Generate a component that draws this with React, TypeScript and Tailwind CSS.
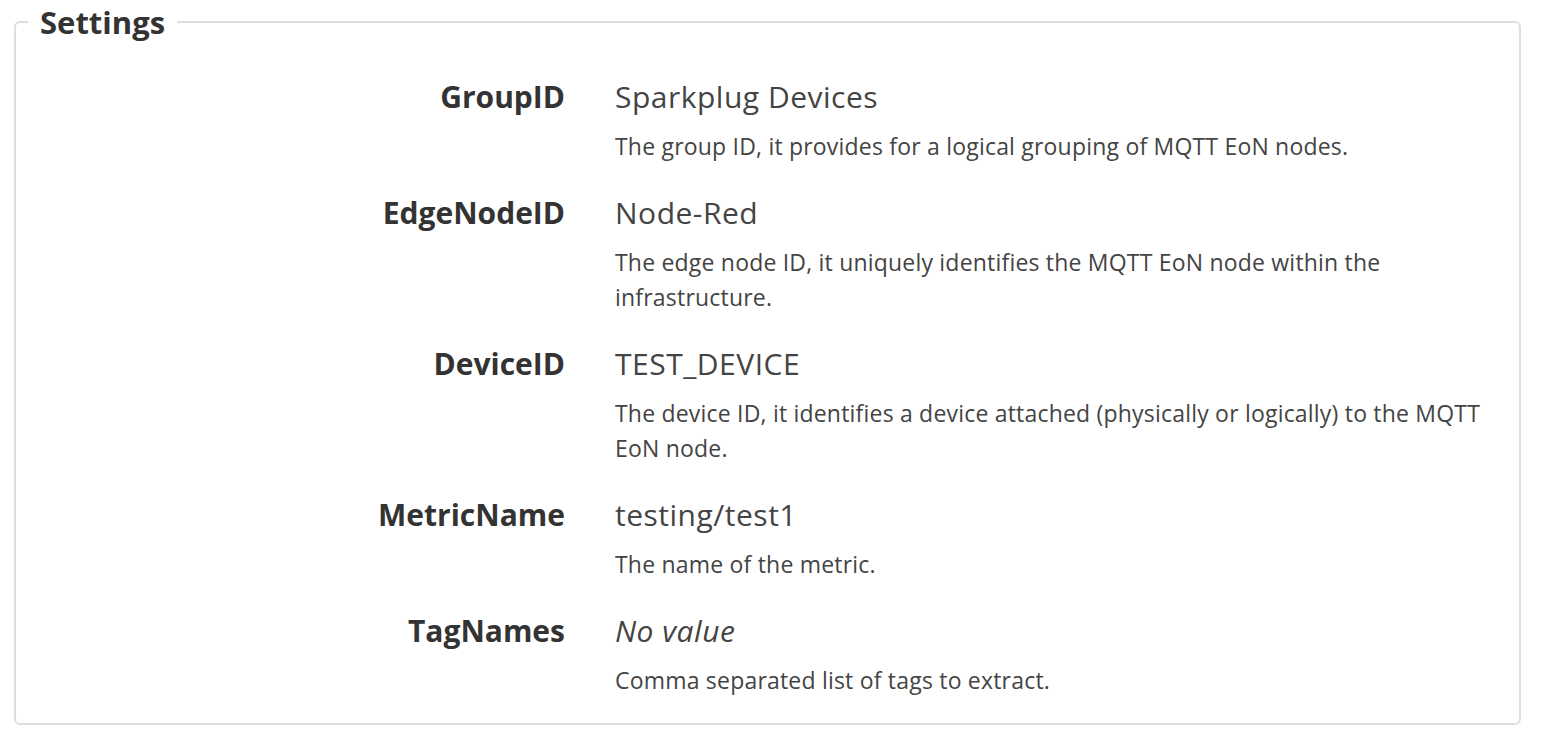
import React from 'react';

interface SettingRow {
  label: string;
  value?: string;
  description: string;
}

const rows: SettingRow[] = [
  {
    label: 'GroupID',
    value: 'Sparkplug Devices',
    description: 'The group ID, it provides for a logical grouping of MQTT EoN nodes.'
  },
  {
    label: 'EdgeNodeID',
    value: 'Node-Red',
    description: 'The edge node ID, it uniquely identifies the MQTT EoN node within the infrastructure.'
  },
  {
    label: 'DeviceID',
    value: 'TEST_DEVICE',
    description:
      'The device ID, it identifies a device attached (physically or logically) to the MQTT EoN node.'
  },
  {
    label: 'MetricName',
    value: 'testing/test1',
    description: 'The name of the metric.'
  },
  {
    label: 'TagNames',
    description: 'Comma separated list of tags to extract.'
  }
];

const App: React.FC = () => {
  return (
    <div className="min-h-screen bg-white pl-[14px] pr-[22px] font-['Open_Sans',sans-serif] text-[#333]">
      <fieldset className="rounded-md border-2 border-[#dedede] px-3 pt-[33px] pb-[25px]">
        <legend className="px-3 text-[31px] leading-[44px] font-bold text-[#333]">Settings</legend>

        <div className="-ml-3 flex flex-col gap-[29px]">
          {rows.map((row) => (
            <div key={row.label} className="grid grid-cols-[549px_1fr] gap-x-[50px]">
              {/* Label */}
              <div className="text-right text-[30px] leading-[40px] font-bold text-[#333]">
                {row.label}
              </div>

              {/* Value and help text */}
              <div className="pr-[10px]">
                {row.value ? (
                  <div className="text-[30px] leading-[40px] tracking-[0.5px] text-[#444]">{row.value}</div>
                ) : (
                  <div className="text-[30px] leading-[40px] tracking-[0.5px] text-[#444] italic">No value</div>
                )}
                <p className="mt-[12px] text-[23px] leading-[35px] tracking-[0.2px] text-[#444]">
                  {row.description}
                </p>
              </div>
            </div>
          ))}
        </div>
      </fieldset>
    </div>
  );
};

export default App;
